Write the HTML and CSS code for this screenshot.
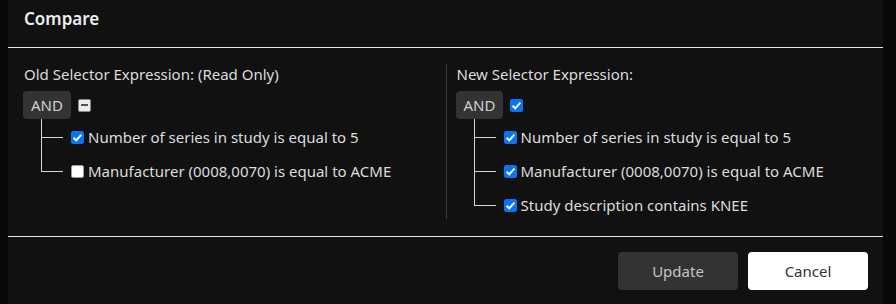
FILE: index.html
```html
<!DOCTYPE html>
<html lang="en">
<head>
    <meta charset="UTF-8">
    <title>Compare</title>
    <link rel="stylesheet" href="styles.css">
</head>
<body>
    <div class="modal">
        <div class="modal-header">Compare</div>

        <div class="modal-body">
            <div class="column">
                <div class="column-title">Old Selector Expression: (Read Only)</div>
                <div class="group-row">
                    <span class="op-button">AND</span>
                    <span class="check indeterminate"></span>
                </div>
                <ul class="tree">
                    <li><span class="check checked"></span>Number of series in study is equal to 5</li>
                    <li><span class="check"></span>Manufacturer (0008,0070) is equal to ACME</li>
                </ul>
            </div>

            <div class="column">
                <div class="column-title">New Selector Expression:</div>
                <div class="group-row">
                    <span class="op-button">AND</span>
                    <span class="check checked"></span>
                </div>
                <ul class="tree">
                    <li><span class="check checked"></span>Number of series in study is equal to 5</li>
                    <li><span class="check checked"></span>Manufacturer (0008,0070) is equal to ACME</li>
                    <li><span class="check checked"></span>Study description contains KNEE</li>
                </ul>
            </div>
        </div>

        <div class="modal-footer">
            <button class="btn btn-dark">Update</button>
            <button class="btn btn-light">Cancel</button>
        </div>
    </div>
</body>
</html>
```

FILE: styles.css
```css
body {
    margin: 0;
    height: 304px;
    overflow: hidden;
    background-color: #080808;
    font-family: "Noto Sans", "Open Sans", sans-serif;
    font-size: 15px;
    color: #dcdcdc;
}
.modal {
    margin-left: 8px;
    width: 875px;
    height: 304px;
    background-color: #111111;
}
.modal-header {
    height: 48px;
    box-sizing: border-box;
    padding: 7px 16px 0;
    border-bottom: 1px solid #e6e6e6;
    font-size: 17px;
    font-weight: 600;
    color: #eeeeee;
}
.modal-body {
    display: grid;
    grid-template-columns: 1fr 1fr;
    padding: 16px 16px 17px;
    border-bottom: 1px solid #e6e6e6;
}
.column + .column {
    border-left: 1px solid #3a3a3a;
    padding-left: 10px;
}
.column-title {
    line-height: 20px;
}
.group-row {
    display: flex;
    align-items: center;
    gap: 7px;
    margin-top: 7px;
    margin-left: -1px;
}
.op-button {
    display: inline-block;
    height: 28px;
    line-height: 28px;
    padding: 0 8px;
    border-radius: 4px;
    background-color: #333333;
    color: #cfcfcf;
}
.check {
    display: inline-block;
    box-sizing: border-box;
    width: 13px;
    height: 13px;
    border-radius: 2px;
    background-color: #ffffff;
    border: 1px solid #9a9a9a;
    flex-shrink: 0;
}
.check.checked {
    border-color: #0a74f5;
    background: #0a74f5 url("data:image/svg+xml;utf8,<svg xmlns='http://www.w3.org/2000/svg' viewBox='0 0 13 13'><path d='M2.6 6.8 L5.2 9.3 L10.4 3.6' fill='none' stroke='white' stroke-width='1.9'/></svg>") center / 13px 13px no-repeat;
}
.check.indeterminate {
    background-color: #ececec;
    border-color: #8a8a8a;
    position: relative;
}
.check.indeterminate::after {
    content: "";
    position: absolute;
    left: 2px;
    right: 2px;
    top: 4px;
    height: 2px;
    background-color: #555555;
}
.tree {
    list-style: none;
    margin: 4px 0 0 17px;
    padding: 0;
}
.tree li {
    position: relative;
    display: flex;
    align-items: center;
    height: 28px;
    padding-left: 30px;
}
.tree li + li {
    margin-top: 6px;
}
.tree li .check {
    margin-right: 4px;
}
.tree li::before {
    content: "";
    position: absolute;
    box-sizing: content-box;
    left: 0;
    top: -6px;
    width: 21px;
    height: 20px;
    border-left: 1px solid #d6d6d6;
    border-bottom: 1px solid #d6d6d6;
}
.tree li:first-child::before {
    top: -4px;
    height: 18px;
}
.tree li:not(:last-child)::after {
    content: "";
    position: absolute;
    left: 0;
    top: 14px;
    bottom: -6px;
    border-left: 1px solid #d6d6d6;
}
.modal-footer {
    display: flex;
    justify-content: flex-end;
    gap: 10px;
    padding: 15px 15px 0;
}
.btn {
    width: 120px;
    height: 38px;
    border: none;
    border-radius: 4px;
    font-family: inherit;
    font-size: 15px;
    cursor: pointer;
}
.btn-dark {
    background-color: #333333;
    color: #c4c4c4;
}
.btn-light {
    background-color: #ffffff;
    color: #333333;
}
```
